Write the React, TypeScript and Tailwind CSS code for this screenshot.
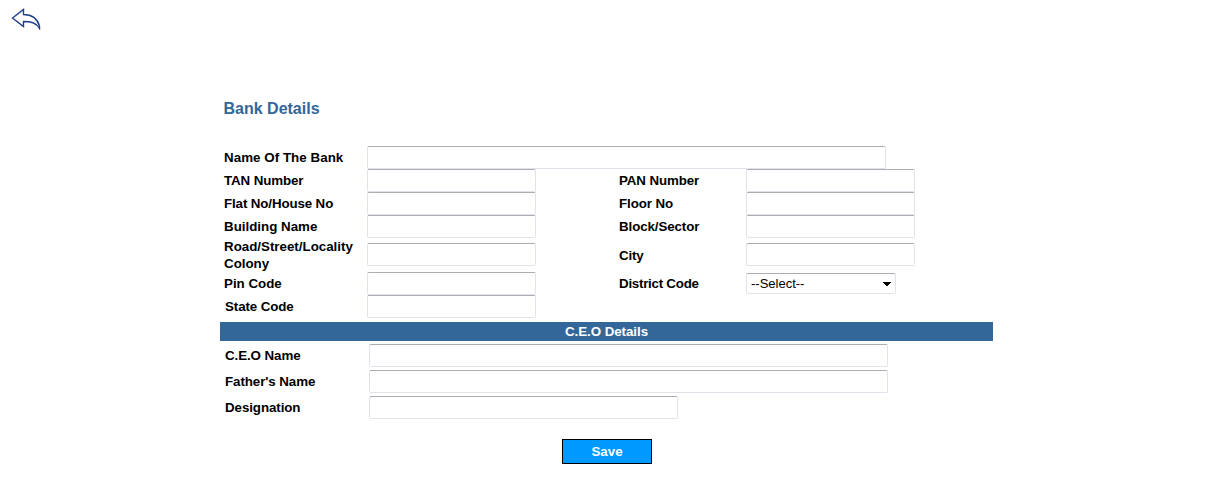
import React from "react";

const fieldClass =
  "block h-[23px] rounded-[2px] border border-[#e2e3ea] border-t-[#abadb3] bg-white px-1 text-[13px] outline-none";

function Field({ label, width }: { label: string; width: string }) {
  return <input type="text" aria-label={label} className={`${fieldClass} ${width}`} />;
}

function Label({ children, className = "" }: { children: React.ReactNode; className?: string }) {
  return <div className={`whitespace-nowrap ${className}`}>{children}</div>;
}

function Row({ children, height = "h-[23px]" }: { children: React.ReactNode; height?: string }) {
  return (
    <div className={`grid grid-cols-[143px_252px_127px_1fr] items-center pl-1 ${height}`}>{children}</div>
  );
}

function CeoRow({ label, width }: { label: string; width: string }) {
  return (
    <div className="grid h-[23px] grid-cols-[144px_1fr] items-center pl-[5px]">
      <Label className="tracking-[-0.08px]">{label}</Label>
      <Field label={label} width={width} />
    </div>
  );
}

export default function App() {
  return (
    <div className="h-[480px] w-[1213px] overflow-hidden bg-white font-['Liberation_Sans',Arial,sans-serif] text-[13.33px] leading-[17px] font-bold text-black">
      <header className="h-[99px] pt-[8px] pl-[11px]">
        <svg width="30" height="22" viewBox="0 0 30 22" fill="none" stroke="#1f3f86" strokeWidth="1.4">
          <path d="M1.5 10 L12.5 1.5 V6.5 C19 6.5 26 9.5 28.5 18 V20.5 C25 14.5 20 13.5 12.5 13.5 V18.5 Z" />
        </svg>
      </header>
      <form className="ml-[220px] w-[773px]" onSubmit={(e) => e.preventDefault()}>
        <h1 className="h-[47px] pl-[3.5px] text-[16px] leading-[19px] text-[#336699]">Bank Details</h1>
        <Row>
          <Label className="tracking-[0.05px]">Name Of The Bank</Label>
          <Field label="Name Of The Bank" width="w-[519px]" />
        </Row>
        <Row>
          <Label className="tracking-[-0.12px]">TAN Number</Label>
          <Field label="TAN Number" width="w-[169px]" />
          <Label className="tracking-[-0.1px]">PAN Number</Label>
          <Field label="PAN Number" width="w-[169px]" />
        </Row>
        <Row>
          <Label className="tracking-[-0.12px]">Flat No/House No</Label>
          <Field label="Flat No/House No" width="w-[169px]" />
          <Label className="tracking-[-0.1px]">Floor No</Label>
          <Field label="Floor No" width="w-[169px]" />
        </Row>
        <Row>
          <Label>Building Name</Label>
          <Field label="Building Name" width="w-[169px]" />
          <Label className="tracking-[-0.1px]">Block/Sector</Label>
          <Field label="Block/Sector" width="w-[169px]" />
        </Row>
        <Row height="h-[34px]">
          <Label>
            Road/Street/Locality
            <br />
            Colony
          </Label>
          <Field label="Road/Street/Locality Colony" width="mb-px w-[169px]" />
          <Label className="tracking-[-0.2px]">City</Label>
          <Field label="City" width="mb-px w-[169px]" />
        </Row>
        <Row>
          <Label>Pin Code</Label>
          <Field label="Pin Code" width="w-[169px]" />
          <Label className="tracking-[-0.25px]">District Code</Label>
          <button
            type="button"
            className="flex h-[21px] w-[150px] items-center justify-between rounded-[2px] border border-[#e2e3ea] border-t-[#abadb3] bg-white pr-[4px] pl-[4px] text-[13px] leading-[17px] font-normal"
          >
            <span>--Select--</span>
            <svg width="8" height="4" viewBox="0 0 8 4" shapeRendering="crispEdges">
              <path d="M0 0H8V1H7V2H6V3H5V4H3V3H2V2H1V1H0Z" fill="#000" />
            </svg>
          </button>
        </Row>
        <Row>
          <Label className="pl-px tracking-[-0.1px]">State Code</Label>
          <Field label="State Code" width="w-[169px]" />
        </Row>
        <h2 className="mt-1 mb-[3px] h-[19px] bg-[#336699] text-center leading-[19px] tracking-[-0.05px] text-white">C.E.O Details</h2>
        <div className="flex flex-col gap-[3px]">
          <CeoRow label="C.E.O Name" width="w-[519px]" />
          <CeoRow label="Father's Name" width="w-[519px]" />
          <CeoRow label="Designation" width="w-[309px]" />
        </div>
        <button
          type="submit"
          className="mt-5 ml-[342px] block h-[25px] w-[90px] border border-black bg-[#0099ff] text-center leading-[23px] text-white"
        >
          Save
        </button>
      </form>
    </div>
  );
}
